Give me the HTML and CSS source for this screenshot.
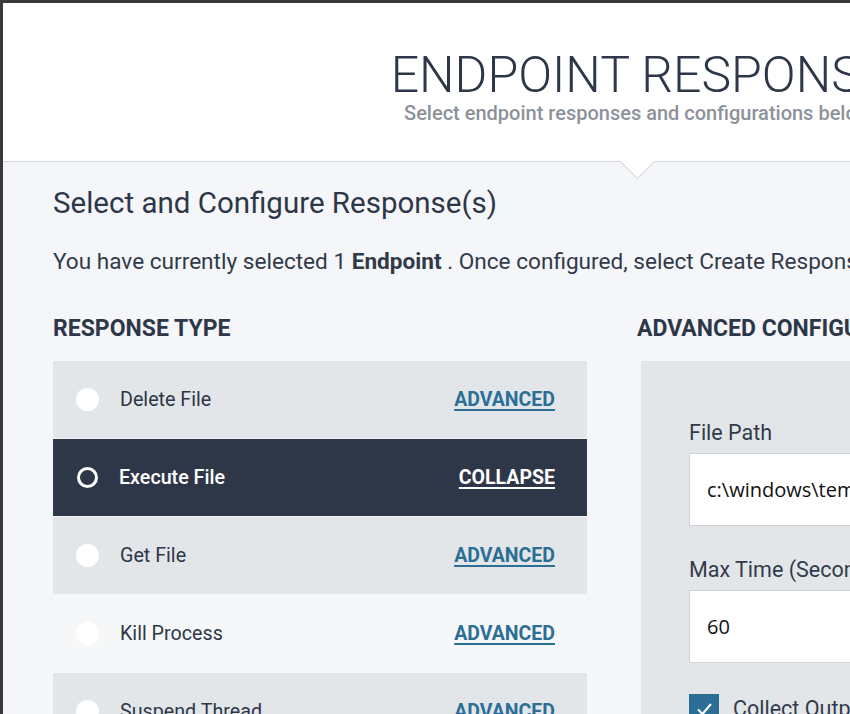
FILE: index.html
```html
<!DOCTYPE html>
<html lang="en">
    <head>
        <meta charset="UTF-8" />
        <meta name="viewport" content="width=device-width, initial-scale=1.0" />
        <title>Endpoint Response</title>
        <link rel="stylesheet" href="styles.css">
    </head>
    <body>
        <div class="page">
            <header class="pageHead">
                <h1>ENDPOINT RESPONSE</h1>
                <p>Select endpoint responses and configurations below.</p>
                <span class="pointer"></span>
            </header>
            <main class="content">
                <h2>Select and Configure Response(s)</h2>
                <p class="intro">
                    You have currently selected 1 <b>Endpoint</b> . Once configured, select Create Response to continue.
                </p>
                <div class="columns">
                    <section>
                        <h3>Response Type</h3>
                        <ul class="typeList">
                            <li>
                                <span class="radio"></span>
                                <span class="name">Delete File</span>
                                <a href="#">ADVANCED</a>
                            </li>
                            <li class="active">
                                <span class="radio"></span>
                                <span class="name">Execute File</span>
                                <a href="#">COLLAPSE</a>
                            </li>
                            <li>
                                <span class="radio"></span>
                                <span class="name">Get File</span>
                                <a href="#">ADVANCED</a>
                            </li>
                            <li>
                                <span class="radio"></span>
                                <span class="name">Kill Process</span>
                                <a href="#">ADVANCED</a>
                            </li>
                            <li>
                                <span class="radio"></span>
                                <span class="name">Suspend Thread</span>
                                <a href="#">ADVANCED</a>
                            </li>
                        </ul>
                    </section>
                    <section>
                        <h3 class="advHead">Advanced Configuration</h3>
                        <form class="config">
                            <label>
                                File Path
                                <input type="text" value="c:\windows\temp\update.exe" />
                            </label>
                            <label>
                                Max Time (Seconds)
                                <input type="text" value="60" />
                            </label>
                            <label class="check">
                                <span class="box">
                                    <svg viewBox="0 0 30 30" width="30" height="30">
                                        <path d="M9 15.5 L13.5 20 L22 10" fill="none" stroke="#fff" stroke-width="2" />
                                    </svg>
                                </span>
                                Collect Output
                            </label>
                        </form>
                    </section>
                </div>
            </main>
        </div>
    </body>
</html>
```

FILE: styles.css
```css
body {
    margin: 0;
    overflow: hidden;
    font-family: Roboto, "Liberation Sans", sans-serif;
    color: #2e3748;
    background-color: #f4f6f9;
}
.page {
    width: 1274px;
    border-top: 3px solid #3a3a3a;
    border-left: 3px solid #3a3a3a;
}
.pageHead {
    position: relative;
    height: 159px;
    box-sizing: border-box;
    padding-top: 47px;
    background-color: #fff;
    border-bottom: 1px solid #d3d6da;
    text-align: center;
}
.pageHead h1 {
    margin: 0;
    font-size: 50px;
    font-weight: 300;
    line-height: 51px;
    color: #2e3748;
}
.pageHead p {
    margin: 0;
    font-size: 20px;
    font-weight: 500;
    line-height: 24px;
    color: #8d929a;
}
.pointer {
    position: absolute;
    left: 622px;
    bottom: -13px;
    width: 24px;
    height: 24px;
    background-color: #fff;
    border-right: 1px solid #d3d6da;
    border-bottom: 1px solid #d3d6da;
    transform: rotate(45deg);
}
.content {
    padding: 23px 50px 0 50px;
}
.content h2 {
    margin: 0;
    font-size: 29.5px;
    font-weight: 400;
    line-height: 36px;
}
.intro {
    margin: 27px 0 0;
    font-size: 22.6px;
    line-height: 28px;
    white-space: nowrap;
    color: #323a49;
}
.intro b {
    font-weight: 700;
}
.columns {
    display: grid;
    grid-template-columns: 534px 1fr;
    column-gap: 50px;
    margin-top: 38px;
}
h3 {
    margin: 0 0 17px;
    font-size: 23px;
    font-weight: 700;
    line-height: 30px;
    text-transform: uppercase;
}
.typeList {
    list-style: none;
    margin: 0;
    padding: 0;
}
.typeList li {
    display: flex;
    align-items: center;
    height: 77px;
    margin-bottom: 1px;
    padding: 0 32px 0 23px;
    font-size: 19.7px;
    background-color: #e3e6e9;
}
.typeList li:nth-child(4) {
    background-color: #f6f7f9;
}
.radio {
    width: 23px;
    height: 23px;
    border-radius: 50%;
    background-color: #fff;
    margin-right: 21px;
    box-sizing: border-box;
}
.name {
    flex: 1;
    color: #2e3748;
}
.typeList a {
    font-size: 19.5px;
    font-weight: 700;
    color: #2b6e96;
    text-decoration: underline;
    text-decoration-thickness: 2px;
    text-underline-offset: 3px;
}
.typeList li.active {
    background-color: #2e3748;
}
.typeList li.active .radio {
    background-color: transparent;
    border: 3px solid #fff;
    width: 21px;
    height: 21px;
    margin-left: 1px;
}
.typeList li.active .name {
    color: #fff;
    font-weight: 500;
}
.typeList li.active a {
    color: #fff;
}
.advHead {
    white-space: nowrap;
}
.config {
    margin-left: 4px;
    padding: 59px 48px 0;
    min-height: 400px;
    background-color: #e3e6e9;
}
.config label {
    display: block;
    margin-bottom: 31px;
    font-size: 21.5px;
    line-height: 26px;
    white-space: nowrap;
    color: #323a49;
}
.config input {
    display: block;
    box-sizing: border-box;
    width: 100%;
    height: 73px;
    margin-top: 7px;
    padding: 0 17px;
    border: 1px solid #cfd2d6;
    font-family: "Open Sans", sans-serif;
    font-size: 20px;
    color: #111;
    background-color: #fff;
}
.config .check {
    display: flex;
    align-items: center;
    gap: 14px;
}
.box {
    display: inline-block;
    width: 30px;
    height: 30px;
    background-color: #2b6e96;
}
.box svg {
    display: block;
}
```
